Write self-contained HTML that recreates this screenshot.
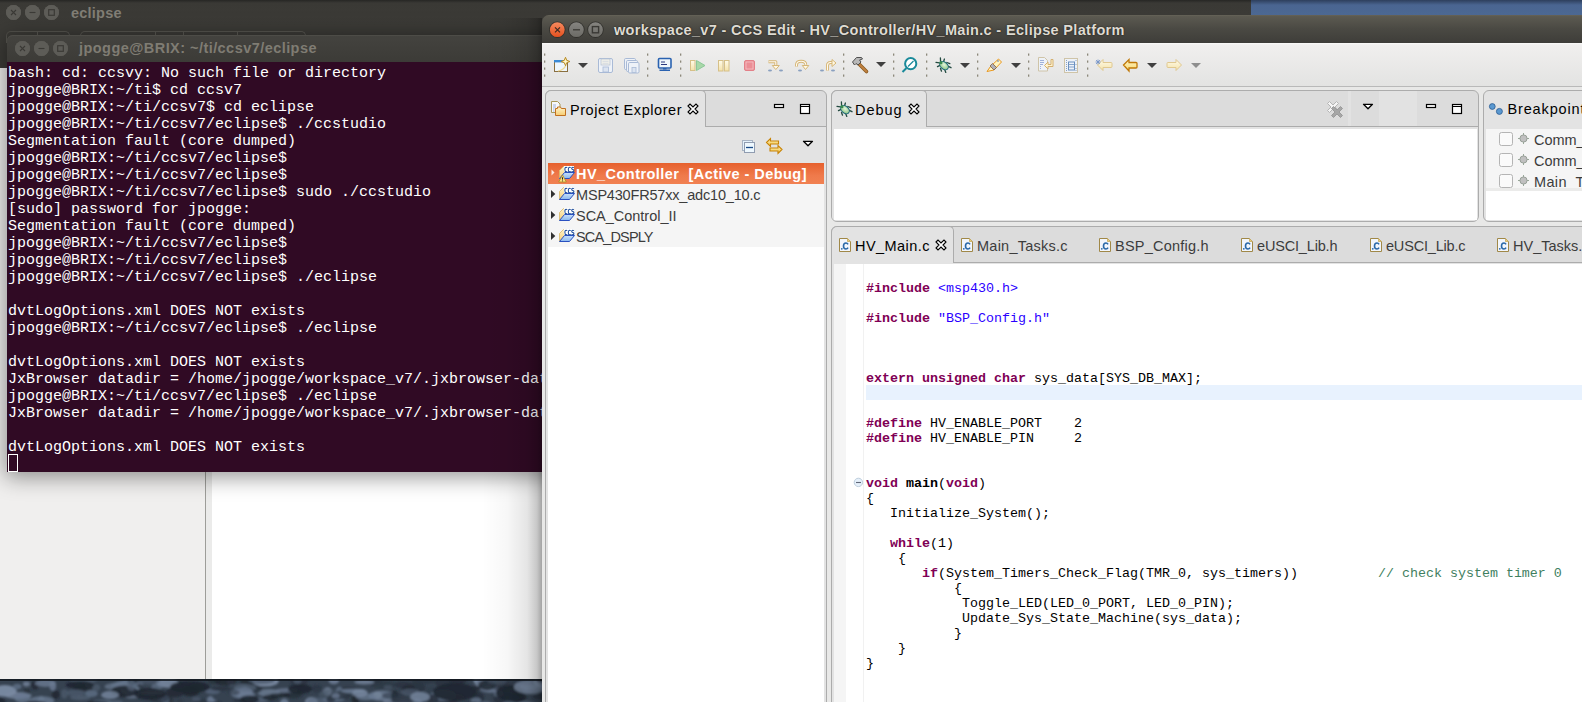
<!DOCTYPE html>
<html><head><meta charset="utf-8"><style>
*{margin:0;padding:0;box-sizing:border-box}
html,body{width:1582px;height:702px;overflow:hidden;background:#3a3935;position:relative;font-family:"Liberation Sans",sans-serif}
.a{position:absolute}
.btn{position:absolute;width:15px;height:15px;border-radius:50%;background:#5b5a55;box-shadow:inset 0 0 0 1px #55544f}
.mono{font-family:"Liberation Mono",monospace}
.term{position:absolute;left:8px;top:65px;font-size:15px;line-height:17px;color:#fff;white-space:pre;font-family:"Liberation Mono",monospace}
.code{position:absolute;left:866px;top:281px;font-size:13.33px;line-height:15px;color:#000;white-space:pre;font-family:"Liberation Mono",monospace}
.k{color:#7f0055;font-weight:bold}
.s{color:#2a00ff}
.c{color:#3f7f5f}
.ui{font-family:"Liberation Sans",sans-serif;white-space:pre;position:absolute;line-height:1}
</style></head><body>

<!-- ===== background eclipse window ===== -->
<div class=a style="left:0;top:0;width:1251px;height:702px;background:linear-gradient(#262624 0,#3a3935 3px,#3c3b37 25px,#3b3a36 100%)"></div>
<div class=a style="left:1251px;top:0;width:331px;height:15px;background:linear-gradient(#2e3f5c,#4a6591 5px,#4c6893)"></div>
<div class=btn style="left:6px;top:5px"></div>
<div class=btn style="left:25px;top:5px"></div>
<div class=btn style="left:44px;top:5px"></div>

<!-- bg window content -->
<div class=a style="left:0;top:68px;width:205px;height:611px;background:#f0efee"></div>
<div class=a style="left:205px;top:68px;width:1px;height:611px;background:#9d9d99"></div>
<div class=a style="left:206px;top:68px;width:6px;height:611px;background:#ebebea"></div>
<div class=a style="left:212px;top:68px;width:330px;height:611px;background:#fff"></div>
<!-- wallpaper strip -->
<svg class=a style="left:0;top:679px" width="542" height="23" viewBox="0 0 542 23"><defs><filter id="blr" x="-5%" y="-50%" width="110%" height="200%"><feGaussianBlur stdDeviation="1.1"/></filter></defs><rect width="542" height="23" fill="#364250"/><g filter="url(#blr)"><ellipse cx="173.8" cy="3.9" rx="10.2" ry="2.3" fill="#222a35" opacity="0.66"/><ellipse cx="27.0" cy="13.2" rx="3.4" ry="3.7" fill="#222a35" opacity="0.61"/><ellipse cx="299.2" cy="1.5" rx="9.2" ry="5.8" fill="#2a3340" opacity="0.76"/><ellipse cx="214.0" cy="25.4" rx="3.5" ry="5.4" fill="#6a7a92" opacity="0.69"/><ellipse cx="293.5" cy="14.8" rx="9.2" ry="4.7" fill="#222a35" opacity="0.76"/><ellipse cx="347.7" cy="9.7" rx="9.0" ry="2.3" fill="#2a3340" opacity="0.78"/><ellipse cx="269.0" cy="13.8" rx="11.5" ry="3.9" fill="#7a8aa2" opacity="0.66"/><ellipse cx="132.1" cy="4.7" rx="11.6" ry="2.3" fill="#6a7a92" opacity="0.74"/><ellipse cx="478.1" cy="19.0" rx="6.2" ry="5.9" fill="#222a35" opacity="0.73"/><ellipse cx="86.1" cy="8.9" rx="13.3" ry="3.7" fill="#222a35" opacity="0.84"/><ellipse cx="311.3" cy="22.8" rx="6.5" ry="4.8" fill="#7a8aa2" opacity="0.76"/><ellipse cx="246.8" cy="21.8" rx="13.4" ry="3.9" fill="#222a35" opacity="0.53"/><ellipse cx="382.2" cy="16.8" rx="13.9" ry="5.3" fill="#6a7a92" opacity="0.82"/><ellipse cx="484.6" cy="9.0" rx="13.3" ry="3.4" fill="#222a35" opacity="0.72"/><ellipse cx="115.5" cy="7.5" rx="11.1" ry="3.6" fill="#7a8aa2" opacity="0.54"/><ellipse cx="243.0" cy="14.3" rx="12.7" ry="5.3" fill="#6a7a92" opacity="0.82"/><ellipse cx="539.5" cy="17.8" rx="7.2" ry="2.9" fill="#222a35" opacity="0.58"/><ellipse cx="123.0" cy="6.1" rx="8.3" ry="4.4" fill="#6a7a92" opacity="0.63"/><ellipse cx="75.4" cy="13.9" rx="9.7" ry="3.3" fill="#4a586a" opacity="0.81"/><ellipse cx="279.6" cy="16.1" rx="10.4" ry="2.2" fill="#1c232c" opacity="0.68"/><ellipse cx="212.6" cy="12.5" rx="7.4" ry="2.8" fill="#5a6a80" opacity="0.70"/><ellipse cx="55.7" cy="15.6" rx="4.1" ry="4.3" fill="#222a35" opacity="0.93"/><ellipse cx="333.8" cy="1.8" rx="5.3" ry="3.5" fill="#6a7a92" opacity="0.93"/><ellipse cx="327.5" cy="12.3" rx="4.3" ry="4.0" fill="#7a8aa2" opacity="0.72"/><ellipse cx="167.1" cy="3.7" rx="11.2" ry="5.0" fill="#7a8aa2" opacity="0.87"/><ellipse cx="84.1" cy="0.6" rx="13.5" ry="4.1" fill="#4a586a" opacity="0.81"/><ellipse cx="499.6" cy="19.7" rx="6.3" ry="4.6" fill="#222a35" opacity="0.81"/><ellipse cx="139.1" cy="9.5" rx="4.8" ry="5.1" fill="#303a48" opacity="0.79"/><ellipse cx="333.5" cy="20.5" rx="11.3" ry="2.8" fill="#5a6a80" opacity="0.87"/><ellipse cx="403.4" cy="5.9" rx="8.7" ry="3.4" fill="#2a3340" opacity="0.95"/><ellipse cx="431.1" cy="12.3" rx="5.1" ry="4.4" fill="#303a48" opacity="0.70"/><ellipse cx="512.2" cy="25.7" rx="13.5" ry="3.5" fill="#5a6a80" opacity="0.55"/><ellipse cx="254.5" cy="8.8" rx="8.3" ry="5.9" fill="#2a3340" opacity="0.72"/><ellipse cx="355.4" cy="20.8" rx="3.9" ry="4.6" fill="#1c232c" opacity="0.85"/><ellipse cx="409.1" cy="12.4" rx="5.0" ry="5.2" fill="#303a48" opacity="0.54"/><ellipse cx="517.3" cy="18.8" rx="8.1" ry="5.0" fill="#222a35" opacity="0.83"/><ellipse cx="88.8" cy="3.3" rx="4.7" ry="5.6" fill="#4a586a" opacity="0.78"/><ellipse cx="323.9" cy="12.3" rx="13.3" ry="2.6" fill="#4a586a" opacity="0.51"/><ellipse cx="436.2" cy="18.9" rx="4.1" ry="5.0" fill="#4a586a" opacity="0.70"/><ellipse cx="476.2" cy="21.5" rx="5.3" ry="3.0" fill="#6a7a92" opacity="0.73"/><ellipse cx="416.6" cy="8.5" rx="9.0" ry="5.3" fill="#2a3340" opacity="0.91"/><ellipse cx="190.3" cy="11.9" rx="9.4" ry="5.6" fill="#1c232c" opacity="0.87"/><ellipse cx="479.7" cy="3.4" rx="4.7" ry="4.0" fill="#7a8aa2" opacity="0.85"/><ellipse cx="330.9" cy="20.2" rx="4.6" ry="2.6" fill="#222a35" opacity="0.75"/><ellipse cx="174.9" cy="13.5" rx="9.1" ry="5.1" fill="#222a35" opacity="0.90"/><ellipse cx="26.4" cy="5.0" rx="3.5" ry="2.4" fill="#7a8aa2" opacity="0.75"/><ellipse cx="414.5" cy="23.7" rx="7.9" ry="4.5" fill="#5a6a80" opacity="0.81"/><ellipse cx="244.7" cy="13.9" rx="8.3" ry="5.8" fill="#6a7a92" opacity="0.92"/><ellipse cx="487.8" cy="5.3" rx="7.9" ry="3.7" fill="#1c232c" opacity="0.70"/><ellipse cx="35.0" cy="6.3" rx="3.8" ry="4.7" fill="#222a35" opacity="0.90"/><ellipse cx="80.3" cy="18.6" rx="10.3" ry="2.6" fill="#4a586a" opacity="0.94"/><ellipse cx="116.2" cy="24.8" rx="7.4" ry="3.9" fill="#5a6a80" opacity="0.57"/><ellipse cx="233.2" cy="13.4" rx="6.7" ry="2.8" fill="#303a48" opacity="0.54"/><ellipse cx="197.0" cy="8.8" rx="8.0" ry="4.8" fill="#1c232c" opacity="0.65"/><ellipse cx="339.4" cy="13.3" rx="3.7" ry="5.9" fill="#5a6a80" opacity="0.94"/><ellipse cx="52.8" cy="6.9" rx="3.4" ry="5.1" fill="#6a7a92" opacity="0.84"/><ellipse cx="447.5" cy="22.1" rx="10.4" ry="5.8" fill="#1c232c" opacity="0.57"/><ellipse cx="502.4" cy="14.8" rx="10.7" ry="2.4" fill="#2a3340" opacity="0.86"/><ellipse cx="96.2" cy="23.3" rx="6.0" ry="2.1" fill="#222a35" opacity="0.86"/><ellipse cx="41.2" cy="22.3" rx="3.7" ry="5.5" fill="#7a8aa2" opacity="0.51"/><ellipse cx="543.9" cy="10.9" rx="13.1" ry="4.5" fill="#2a3340" opacity="0.74"/><ellipse cx="126.6" cy="2.8" rx="4.8" ry="2.2" fill="#5a6a80" opacity="0.92"/><ellipse cx="342.0" cy="13.8" rx="5.3" ry="3.8" fill="#4a586a" opacity="0.62"/><ellipse cx="438.6" cy="25.9" rx="3.4" ry="2.1" fill="#5a6a80" opacity="0.73"/><ellipse cx="130.6" cy="11.6" rx="10.2" ry="4.6" fill="#7a8aa2" opacity="0.75"/><ellipse cx="485.6" cy="25.2" rx="6.4" ry="2.9" fill="#5a6a80" opacity="0.65"/><ellipse cx="454.4" cy="18.4" rx="10.0" ry="3.6" fill="#303a48" opacity="0.94"/><ellipse cx="457.0" cy="0.4" rx="9.9" ry="5.5" fill="#1c232c" opacity="0.57"/><ellipse cx="41.6" cy="21.9" rx="12.6" ry="4.7" fill="#6a7a92" opacity="0.77"/><ellipse cx="377.4" cy="1.2" rx="5.0" ry="3.1" fill="#2a3340" opacity="0.62"/><ellipse cx="525.9" cy="25.3" rx="9.0" ry="3.0" fill="#6a7a92" opacity="0.60"/><ellipse cx="96.0" cy="8.7" rx="3.9" ry="3.1" fill="#5a6a80" opacity="0.61"/><ellipse cx="423.5" cy="2.4" rx="12.0" ry="2.6" fill="#2a3340" opacity="0.68"/><ellipse cx="160.4" cy="16.4" rx="3.9" ry="5.8" fill="#4a586a" opacity="0.80"/><ellipse cx="390.2" cy="22.9" rx="7.3" ry="3.3" fill="#7a8aa2" opacity="0.57"/><ellipse cx="394.7" cy="16.7" rx="3.5" ry="5.3" fill="#1c232c" opacity="0.83"/><ellipse cx="443.3" cy="3.6" rx="8.8" ry="4.0" fill="#2a3340" opacity="0.87"/><ellipse cx="317.4" cy="23.2" rx="10.5" ry="4.8" fill="#5a6a80" opacity="0.54"/><ellipse cx="18.1" cy="16.6" rx="13.6" ry="3.5" fill="#7a8aa2" opacity="0.75"/><ellipse cx="341.5" cy="16.3" rx="10.5" ry="4.0" fill="#2a3340" opacity="0.71"/><ellipse cx="33.7" cy="24.2" rx="12.9" ry="2.4" fill="#222a35" opacity="0.84"/><ellipse cx="256.6" cy="21.0" rx="12.3" ry="2.9" fill="#5a6a80" opacity="0.60"/><ellipse cx="353.8" cy="12.0" rx="12.3" ry="2.3" fill="#6a7a92" opacity="0.85"/><ellipse cx="335.6" cy="16.7" rx="3.9" ry="2.6" fill="#6a7a92" opacity="0.79"/><ellipse cx="377.5" cy="16.1" rx="4.5" ry="3.9" fill="#7a8aa2" opacity="0.62"/><ellipse cx="365.9" cy="18.0" rx="10.4" ry="3.2" fill="#6a7a92" opacity="0.71"/><ellipse cx="252.4" cy="3.1" rx="12.8" ry="2.8" fill="#222a35" opacity="0.92"/><ellipse cx="4.7" cy="11.9" rx="12.0" ry="5.9" fill="#7a8aa2" opacity="0.95"/><ellipse cx="208.5" cy="23.8" rx="13.2" ry="2.3" fill="#222a35" opacity="0.56"/><ellipse cx="284.3" cy="24.8" rx="4.5" ry="5.3" fill="#6a7a92" opacity="0.90"/><ellipse cx="383.2" cy="6.0" rx="12.9" ry="3.9" fill="#2a3340" opacity="0.57"/><ellipse cx="519.4" cy="17.7" rx="7.5" ry="4.9" fill="#1c232c" opacity="0.65"/><ellipse cx="169.5" cy="21.8" rx="3.0" ry="5.0" fill="#1c232c" opacity="0.55"/><ellipse cx="506.4" cy="18.5" rx="12.9" ry="3.2" fill="#303a48" opacity="0.53"/><ellipse cx="210.4" cy="22.6" rx="3.8" ry="5.7" fill="#6a7a92" opacity="0.88"/><ellipse cx="149.9" cy="1.3" rx="10.3" ry="4.5" fill="#4a586a" opacity="0.61"/><ellipse cx="141.7" cy="13.3" rx="5.1" ry="3.5" fill="#1c232c" opacity="0.90"/><ellipse cx="443.2" cy="16.4" rx="13.0" ry="5.8" fill="#5a6a80" opacity="0.82"/><ellipse cx="22.3" cy="19.0" rx="8.0" ry="5.0" fill="#6a7a92" opacity="0.72"/><ellipse cx="498.4" cy="14.3" rx="4.9" ry="3.7" fill="#6a7a92" opacity="0.63"/><ellipse cx="402.9" cy="25.4" rx="5.9" ry="4.6" fill="#6a7a92" opacity="0.72"/><ellipse cx="364.2" cy="3.1" rx="10.1" ry="2.3" fill="#7a8aa2" opacity="0.75"/><ellipse cx="245.0" cy="8.7" rx="11.4" ry="3.7" fill="#5a6a80" opacity="0.61"/><ellipse cx="91.4" cy="14.5" rx="6.5" ry="3.5" fill="#5a6a80" opacity="0.90"/><ellipse cx="408.8" cy="10.7" rx="7.6" ry="4.1" fill="#1c232c" opacity="0.62"/><ellipse cx="410.2" cy="13.0" rx="9.3" ry="3.4" fill="#5a6a80" opacity="0.54"/><ellipse cx="490.0" cy="10.0" rx="10.1" ry="3.7" fill="#6a7a92" opacity="0.88"/><ellipse cx="476.8" cy="0.6" rx="3.4" ry="4.8" fill="#7a8aa2" opacity="0.94"/><ellipse cx="265.4" cy="1.9" rx="13.2" ry="5.7" fill="#7a8aa2" opacity="0.94"/><ellipse cx="132.2" cy="2.8" rx="4.7" ry="4.1" fill="#222a35" opacity="0.92"/><ellipse cx="393.4" cy="16.8" rx="11.4" ry="3.8" fill="#2a3340" opacity="0.50"/><ellipse cx="64.4" cy="14.8" rx="3.4" ry="4.9" fill="#4a586a" opacity="0.78"/><ellipse cx="286.6" cy="11.4" rx="11.4" ry="2.4" fill="#6a7a92" opacity="0.74"/><ellipse cx="316.8" cy="10.1" rx="5.5" ry="4.4" fill="#2a3340" opacity="0.74"/><ellipse cx="545.0" cy="7.2" rx="6.5" ry="5.4" fill="#5a6a80" opacity="0.71"/><ellipse cx="124.6" cy="6.4" rx="13.6" ry="4.8" fill="#6a7a92" opacity="0.52"/><ellipse cx="102.2" cy="23.0" rx="10.1" ry="2.3" fill="#5a6a80" opacity="0.80"/><ellipse cx="505.7" cy="5.9" rx="3.4" ry="3.4" fill="#1c232c" opacity="0.66"/><ellipse cx="213.8" cy="0.2" rx="6.2" ry="5.4" fill="#222a35" opacity="0.59"/><ellipse cx="530.4" cy="8.1" rx="12.0" ry="2.9" fill="#5a6a80" opacity="0.62"/><ellipse cx="485.9" cy="2.8" rx="9.9" ry="4.4" fill="#5a6a80" opacity="0.72"/><ellipse cx="497.5" cy="1.5" rx="9.5" ry="5.7" fill="#2a3340" opacity="0.60"/><ellipse cx="532.7" cy="3.7" rx="3.6" ry="2.2" fill="#1c232c" opacity="0.70"/><ellipse cx="388.0" cy="8.2" rx="4.2" ry="2.3" fill="#4a586a" opacity="0.65"/><ellipse cx="97.4" cy="24.3" rx="11.2" ry="2.1" fill="#1c232c" opacity="0.88"/><ellipse cx="538.7" cy="11.5" rx="4.2" ry="2.3" fill="#222a35" opacity="0.66"/><ellipse cx="522.4" cy="3.2" rx="13.6" ry="2.8" fill="#303a48" opacity="0.85"/><ellipse cx="165.4" cy="20.9" rx="4.0" ry="4.8" fill="#5a6a80" opacity="0.67"/><ellipse cx="502.6" cy="5.0" rx="7.0" ry="5.6" fill="#2a3340" opacity="0.78"/><ellipse cx="131.9" cy="16.3" rx="7.5" ry="3.5" fill="#7a8aa2" opacity="0.53"/><ellipse cx="502.9" cy="6.7" rx="11.2" ry="5.6" fill="#303a48" opacity="0.66"/><ellipse cx="179.9" cy="24.8" rx="3.5" ry="5.0" fill="#303a48" opacity="0.92"/><ellipse cx="159.2" cy="18.8" rx="9.6" ry="5.2" fill="#222a35" opacity="0.51"/><ellipse cx="124.1" cy="12.4" rx="13.5" ry="5.8" fill="#1c232c" opacity="0.86"/><ellipse cx="499.3" cy="21.2" rx="4.5" ry="4.0" fill="#2a3340" opacity="0.86"/><ellipse cx="402.6" cy="21.4" rx="11.5" ry="4.4" fill="#303a48" opacity="0.89"/><ellipse cx="249.4" cy="20.4" rx="9.6" ry="4.0" fill="#1c232c" opacity="0.84"/><ellipse cx="131.5" cy="1.7" rx="3.4" ry="4.2" fill="#303a48" opacity="0.57"/><ellipse cx="230.5" cy="2.7" rx="3.8" ry="4.5" fill="#5a6a80" opacity="0.54"/><ellipse cx="270.2" cy="18.5" rx="7.9" ry="2.9" fill="#1c232c" opacity="0.71"/><ellipse cx="487.0" cy="6.1" rx="8.9" ry="5.1" fill="#222a35" opacity="0.85"/><ellipse cx="157.2" cy="7.3" rx="5.9" ry="3.0" fill="#6a7a92" opacity="0.59"/><ellipse cx="131.6" cy="6.4" rx="4.7" ry="5.5" fill="#5a6a80" opacity="0.65"/><ellipse cx="213.6" cy="25.8" rx="8.6" ry="2.9" fill="#222a35" opacity="0.79"/><ellipse cx="542.0" cy="2.7" rx="8.2" ry="5.3" fill="#7a8aa2" opacity="0.91"/><ellipse cx="17.3" cy="7.6" rx="4.3" ry="2.8" fill="#5a6a80" opacity="0.92"/><ellipse cx="200.5" cy="22.5" rx="7.9" ry="3.0" fill="#2a3340" opacity="0.55"/><ellipse cx="324.1" cy="16.1" rx="5.4" ry="3.5" fill="#4a586a" opacity="0.52"/><ellipse cx="546.9" cy="1.0" rx="11.1" ry="5.7" fill="#2a3340" opacity="0.87"/><ellipse cx="220.8" cy="9.7" rx="9.8" ry="2.3" fill="#2a3340" opacity="0.86"/><ellipse cx="297.5" cy="1.6" rx="4.1" ry="3.6" fill="#4a586a" opacity="0.79"/><ellipse cx="45.3" cy="4.3" rx="10.6" ry="3.6" fill="#6a7a92" opacity="0.80"/><ellipse cx="225.7" cy="1.3" rx="11.2" ry="5.5" fill="#1c232c" opacity="0.69"/><ellipse cx="472.1" cy="25.9" rx="7.0" ry="2.8" fill="#1c232c" opacity="0.59"/><ellipse cx="-1.8" cy="23.4" rx="7.7" ry="5.3" fill="#1c232c" opacity="0.76"/><ellipse cx="196.3" cy="20.1" rx="4.4" ry="2.2" fill="#4a586a" opacity="0.79"/><ellipse cx="497.2" cy="2.3" rx="9.8" ry="3.5" fill="#4a586a" opacity="0.57"/><ellipse cx="151.4" cy="13.6" rx="13.2" ry="2.4" fill="#7a8aa2" opacity="0.84"/><ellipse cx="432.3" cy="20.9" rx="6.3" ry="5.3" fill="#2a3340" opacity="0.94"/><ellipse cx="261.5" cy="1.4" rx="13.2" ry="3.6" fill="#4a586a" opacity="0.79"/><ellipse cx="190" cy="8" rx="20" ry="6" fill="#1e2630" opacity=".9"/><ellipse cx="455" cy="13" rx="22" ry="9" fill="#1e2630" opacity=".9"/><ellipse cx="510" cy="14" rx="14" ry="8" fill="#1e2630" opacity=".9"/><ellipse cx="300" cy="10" rx="12" ry="5" fill="#1e2630" opacity=".9"/><ellipse cx="150" cy="15" rx="16" ry="6" fill="#1e2630" opacity=".9"/><ellipse cx="80" cy="6" rx="14" ry="4" fill="#1e2630" opacity=".9"/><ellipse cx="530" cy="8" rx="16" ry="7" fill="#7888a0" opacity=".8"/><ellipse cx="420" cy="18" rx="10" ry="5" fill="#7888a0" opacity=".8"/><ellipse cx="110" cy="16" rx="9" ry="4" fill="#7888a0" opacity=".8"/><ellipse cx="360" cy="14" rx="8" ry="4" fill="#7888a0" opacity=".8"/></g><rect width="542" height="2" fill="#10151c" opacity=".8"/></svg>
<!-- shadow under terminal -->
<div class=a style="left:7px;top:35px;width:560px;height:437px;border-radius:6px 6px 0 0;box-shadow:0 3px 22px 2px rgba(0,0,0,.42)"></div>
<!-- ===== terminal window ===== -->
<div class=a style="left:6px;top:31px;width:64px;height:12px;border:1px solid #4a4944;border-bottom:0;border-radius:5px 5px 0 0"></div>
<div class=a style="left:80px;top:31px;width:226px;height:12px;border:1px solid #4a4944;border-bottom:0;border-radius:5px 5px 0 0"></div>
<div class=a style="left:37px;top:31px;width:1px;height:4px;background:#4a4944"></div>
<div class=a style="left:155px;top:31px;width:1px;height:4px;background:#4a4944"></div>
<div class=a style="left:183px;top:31px;width:1px;height:4px;background:#4a4944"></div>
<div class=a style="left:237px;top:31px;width:1px;height:4px;background:#4a4944"></div>
<div class=a style="left:7px;top:35px;width:560px;height:27px;border-radius:6px 6px 0 0;background:linear-gradient(#44433f,#3c3b37);box-shadow:inset 0 1px 0 #4d4c47"></div>
<div class=btn style="left:15px;top:41px"></div>
<div class=btn style="left:34px;top:41px"></div>
<div class=btn style="left:53px;top:41px"></div>
<div class=a style="left:7px;top:62px;width:535px;height:410px;background:#300a24"></div>
<div class=term id=term>bash: cd: ccsvy: No such file or directory
jpogge@BRIX:~/ti$ cd ccsv7
jpogge@BRIX:~/ti/ccsv7$ cd eclipse
jpogge@BRIX:~/ti/ccsv7/eclipse$ ./ccstudio
Segmentation fault (core dumped)
jpogge@BRIX:~/ti/ccsv7/eclipse$
jpogge@BRIX:~/ti/ccsv7/eclipse$
jpogge@BRIX:~/ti/ccsv7/eclipse$ sudo ./ccstudio
[sudo] password for jpogge:
Segmentation fault (core dumped)
jpogge@BRIX:~/ti/ccsv7/eclipse$
jpogge@BRIX:~/ti/ccsv7/eclipse$
jpogge@BRIX:~/ti/ccsv7/eclipse$ ./eclipse

dvtLogOptions.xml DOES NOT exists
jpogge@BRIX:~/ti/ccsv7/eclipse$ ./eclipse

dvtLogOptions.xml DOES NOT exists
JxBrowser datadir = /home/jpogge/workspace_v7/.jxbrowser-data
jpogge@BRIX:~/ti/ccsv7/eclipse$ ./eclipse
JxBrowser datadir = /home/jpogge/workspace_v7/.jxbrowser-data

dvtLogOptions.xml DOES NOT exists</div>
<div class=a style="left:7.5px;top:453.5px;width:10.5px;height:18px;border:1.3px solid #fff"></div>

<!-- shadow left of CCS window -->
<div class=a style="left:482px;top:18px;width:60px;height:684px;background:linear-gradient(90deg,rgba(0,0,0,0) 0,rgba(0,0,0,.03) 25px,rgba(0,0,0,.1) 45px,rgba(0,0,0,.22) 55px,rgba(0,0,0,.36) 60px)"></div>
<!-- ===== CCS eclipse window ===== -->
<div class=a style="left:542px;top:30px;width:1040px;height:672px;background:#e8e8e7"></div>
<div class=a style="left:542px;top:15px;width:1060px;height:28px;border-radius:7px 7px 0 0;background:linear-gradient(#69665a 0,#5c5a51 1px,#4a4943 50%,#3e3d39 100%)"></div>
<div class=a style="left:550px;top:22px;width:15px;height:15px;border-radius:50%;background:radial-gradient(circle at 50% 35%,#f5804f,#e0532a)"></div>
<div class=a style="left:569px;top:22px;width:15px;height:15px;border-radius:50%;background:linear-gradient(#6f6d66,#57554f);box-shadow:inset 0 0 0 1px #45443f"></div>
<div class=a style="left:588px;top:22px;width:15px;height:15px;border-radius:50%;background:linear-gradient(#6f6d66,#57554f);box-shadow:inset 0 0 0 1px #45443f"></div>
<!-- toolbar -->
<div class=a style="left:542px;top:43px;width:1040px;height:43px;background:linear-gradient(#fafaf9 0,#f0efee 2px,#e3e3e2 100%)"></div>
<div class=a style="left:542px;top:86px;width:1040px;height:1px;background:#b9b9b9"></div>

<!-- Project Explorer panel -->
<div class=a style="left:545px;top:90px;width:282px;height:640px;border:1px solid #acacac;border-radius:6px 6px 0 0;background:#dcdcdc"></div>
<div class=a style="left:545px;top:90px;width:161px;height:37px;border:1px solid #acacac;border-bottom:0;border-radius:6px 5px 0 0;background:#e3e3e3"></div>
<div class=a style="left:706px;top:126px;width:120px;height:1px;background:#acacac"></div>
<div class=a style="left:546px;top:127px;width:280px;height:600px;background:#e3e3e3"></div>
<div class=a style="left:548px;top:163px;width:276px;height:84px;background:#f5f5f5"></div>
<div class=a style="left:548px;top:247px;width:276px;height:500px;background:#fff"></div>
<div class=a style="left:548px;top:163px;width:276px;height:21px;background:linear-gradient(#e6602d,#ef7a4b 60%,#f18152)"></div>

<!-- Debug panel -->
<div class=a style="left:831px;top:90px;width:648px;height:132px;border:1px solid #acacac;border-radius:6px;background:#dcdcdc"></div>
<div class=a style="left:1348px;top:91px;width:3px;height:35px;background:#e2e2e2"></div>
<div class=a style="left:1379px;top:91px;width:38px;height:35px;background:#e2e2e2"></div>
<div class=a style="left:831px;top:90px;width:96px;height:37px;border:1px solid #acacac;border-bottom:0;border-radius:6px 5px 0 0;background:#e3e3e3"></div>
<div class=a style="left:927px;top:126px;width:551px;height:1px;background:#acacac"></div>
<div class=a style="left:832px;top:127px;width:646px;height:94px;border-radius:0 0 5px 5px;background:#e3e3e3"></div>
<div class=a style="left:834px;top:129px;width:643px;height:91px;background:#fff"></div>

<!-- Breakpoints panel -->
<div class=a style="left:1483px;top:90px;width:200px;height:132px;border:1px solid #acacac;border-radius:6px;background:#e3e3e3"></div>
<div class=a style="left:1486px;top:129px;width:200px;height:59px;background:#f5f5f5"></div>
<div class=a style="left:1486px;top:188px;width:200px;height:3px;background:#ebebea"></div>
<div class=a style="left:1486px;top:191px;width:200px;height:29px;background:#fff"></div>

<!-- Editor panel -->
<div class=a style="left:831px;top:226px;width:800px;height:600px;border:1px solid #acacac;border-radius:6px 6px 0 0;background:#dcdcdc"></div>
<div class=a style="left:831px;top:226px;width:123px;height:37px;border:1px solid #acacac;border-bottom:0;border-radius:6px 5px 0 0;background:#e3e3e3"></div>
<div class=a style="left:954px;top:262px;width:700px;height:1px;background:#acacac"></div>
<div class=a style="left:832px;top:263px;width:800px;height:500px;background:#e3e3e3"></div>
<div class=a style="left:834px;top:264px;width:800px;height:500px;background:#fff"></div>
<div class=a style="left:834px;top:264px;width:12px;height:500px;background:#f5f5f5"></div>
<div class=a style="left:863px;top:264px;width:1px;height:500px;background:#f1f1f1"></div>
<div class=a style="left:866px;top:385px;width:720px;height:15px;background:#e8f2fe"></div>

<div class=code id=code><span class=k>#include</span> <span class=s>&lt;msp430.h&gt;</span>

<span class=k>#include</span> <span class=s>"BSP_Config.h"</span>



<span class=k>extern</span> <span class=k>unsigned</span> <span class=k>char</span> sys_data[SYS_DB_MAX];


<span class=k>#define</span> HV_ENABLE_PORT    2
<span class=k>#define</span> HV_ENABLE_PIN     2


<span class=k>void</span> <b>main</b>(<span class=k>void</span>)
{
   Initialize_System();

   <span class=k>while</span>(1)
    {
       <span class=k>if</span>(System_Timers_Check_Flag(TMR_0, sys_timers))          <span class=c>// check system timer 0</span>
           {
            Toggle_LED(LED_0_PORT, LED_0_PIN);
            Update_Sys_State_Machine(sys_data);
           }
    }
}</div>

<!-- TEXTS -->
<div class=ui style="left:71.0px;top:5.73px;font-size:14.5px;letter-spacing:0.221px;color:#807d74;font-weight:bold">eclipse</div>
<div class=ui style="left:79.0px;top:40.73px;font-size:14.5px;letter-spacing:0.448px;color:#7f7c73;font-weight:bold">jpogge@BRIX: ~/ti/ccsv7/eclipse</div>
<div class=ui style="left:614.0px;top:22.73px;font-size:14.5px;letter-spacing:0.331px;color:#dfdbd2;font-weight:bold;text-shadow:0 0 1.5px rgba(0,0,0,.85)">workspace_v7 - CCS Edit - HV_Controller/HV_Main.c - Eclipse Platform</div>
<div class=ui style="left:570.0px;top:102.73px;font-size:14.5px;letter-spacing:0.557px;color:#000">Project Explorer</div>
<div class=ui style="left:576.0px;top:166.73px;font-size:14.5px;letter-spacing:0.460px;color:#fff;font-weight:bold">HV_Controller  [Active - Debug]</div>
<div class=ui style="left:576.0px;top:187.73px;font-size:14.5px;letter-spacing:-0.187px;color:#3c3c3c">MSP430FR57xx_adc10_10.c</div>
<div class=ui style="left:576.0px;top:208.73px;font-size:14.5px;letter-spacing:-0.019px;color:#3c3c3c">SCA_Control_II</div>
<div class=ui style="left:576.0px;top:229.73px;font-size:14.5px;letter-spacing:-0.857px;color:#3c3c3c">SCA_DSPLY</div>
<div class=ui style="left:855.0px;top:102.73px;font-size:14.5px;letter-spacing:0.943px;color:#000">Debug</div>
<div class=ui style="left:1507.5px;top:102.23px;font-size:14.5px;letter-spacing:0.853px;color:#000">Breakpoint</div>
<div class=ui style="left:1534.0px;top:132.73px;font-size:14.5px;letter-spacing:-0.064px;color:#3c3c3c">Comm_</div>
<div class=ui style="left:1534.0px;top:153.73px;font-size:14.5px;letter-spacing:-0.064px;color:#3c3c3c">Comm_</div>
<div class=ui style="left:1534.0px;top:174.73px;font-size:14.5px;letter-spacing:0.360px;color:#3c3c3c">Main  T</div>
<div class=ui style="left:855.0px;top:238.73px;font-size:14.5px;letter-spacing:0.448px;color:#000">HV_Main.c</div>
<div class=ui style="left:977.0px;top:238.73px;font-size:14.5px;letter-spacing:0.242px;color:#3c3c3c">Main_Tasks.c</div>
<div class=ui style="left:1115.0px;top:238.73px;font-size:14.5px;letter-spacing:0.220px;color:#3c3c3c">BSP_Config.h</div>
<div class=ui style="left:1257.0px;top:238.73px;font-size:14.5px;letter-spacing:-0.171px;color:#3c3c3c">eUSCI_Lib.h</div>
<div class=ui style="left:1386.0px;top:238.73px;font-size:14.5px;letter-spacing:-0.190px;color:#3c3c3c">eUSCI_Lib.c</div>
<div class=ui style="left:1513.0px;top:238.73px;font-size:14.5px;letter-spacing:0.000px;color:#3c3c3c">HV_Tasks.c</div>
<!-- /TEXTS -->
<!-- ICONS1 -->
<svg class=a style="left:0;top:0" width="1582" height="702" viewBox="0 0 1582 702">
<defs>
 <linearGradient id="gOr" x1="0" y1="0" x2="0" y2="1"><stop offset="0" stop-color="#f68a5e"/><stop offset="1" stop-color="#e4501f"/></linearGradient>
 <linearGradient id="gGr" x1="0" y1="0" x2="0" y2="1"><stop offset="0" stop-color="#858480"/><stop offset="1" stop-color="#6c6b66"/></linearGradient>
 <linearGradient id="gTan" x1="0" y1="0" x2="0" y2="1"><stop offset="0" stop-color="#fffbea"/><stop offset="1" stop-color="#f4e2a8"/></linearGradient>
 <linearGradient id="gYel" x1="0" y1="0" x2="0" y2="1"><stop offset="0" stop-color="#fff6c8"/><stop offset="1" stop-color="#f8d870"/></linearGradient>
</defs>
<!-- bg window buttons -->
<g fill="#5d5c57"><circle cx="13.5" cy="12.5" r="7.5"/><circle cx="32.5" cy="12.5" r="7.5"/><circle cx="51.5" cy="12.5" r="7.5"/></g>
<g stroke="#3b3a36" stroke-width="1.1" fill="none"><path d="M11 10l5 5M16 10l-5 5"/><path d="M29.5 12.5h6"/><rect x="48.7" y="9.7" width="5.6" height="5.6" stroke-width="1.2"/></g>
<!-- terminal buttons -->
<g fill="#5d5c57"><circle cx="22.5" cy="48.5" r="7.5"/><circle cx="41.5" cy="48.5" r="7.5"/><circle cx="60.5" cy="48.5" r="7.5"/></g>
<g stroke="#3b3a36" stroke-width="1.1" fill="none"><path d="M20 46l5 5M25 46l-5 5"/><path d="M38.5 48.5h6"/><rect x="57.7" y="45.7" width="5.6" height="5.6" stroke-width="1.2"/></g>
<!-- CCS title buttons -->
<circle cx="557.3" cy="29.7" r="8.2" fill="#302f2b"/><circle cx="557.3" cy="29.7" r="7.4" fill="url(#gOr)"/>
<circle cx="576.4" cy="29.7" r="8.2" fill="#302f2b"/><circle cx="576.4" cy="29.7" r="7.4" fill="url(#gGr)"/>
<circle cx="595.5" cy="29.7" r="8.2" fill="#302f2b"/><circle cx="595.5" cy="29.7" r="7.4" fill="url(#gGr)"/>
<g stroke="#3a2a22" stroke-width="1.2" fill="none"><path d="M555 27.3l5 5M560 27.3l-5 5"/></g>
<path d="M573 29.8h7" stroke="#3a3935" stroke-width="1.3"/>
<rect x="592.4" y="26.6" width="6.2" height="6.2" fill="none" stroke="#3a3935" stroke-width="1.4"/>

<!-- toolbar grips -->
<defs></defs>
<g fill="#8c887a">
 <g transform="translate(544 53.5)"><g><rect x="0" y="0" width="1.3" height="2.2"/><rect x="0" y="7" width="1.3" height="2.2"/><rect x="0" y="14" width="1.3" height="2.2"/><rect x="0" y="21" width="1.3" height="2.2"/></g></g><g transform="translate(647 53.5)"><g><rect x="0" y="0" width="1.3" height="2.2"/><rect x="0" y="7" width="1.3" height="2.2"/><rect x="0" y="14" width="1.3" height="2.2"/><rect x="0" y="21" width="1.3" height="2.2"/></g></g><g transform="translate(680 53.5)"><g><rect x="0" y="0" width="1.3" height="2.2"/><rect x="0" y="7" width="1.3" height="2.2"/><rect x="0" y="14" width="1.3" height="2.2"/><rect x="0" y="21" width="1.3" height="2.2"/></g></g><g transform="translate(843 53.5)"><g><rect x="0" y="0" width="1.3" height="2.2"/><rect x="0" y="7" width="1.3" height="2.2"/><rect x="0" y="14" width="1.3" height="2.2"/><rect x="0" y="21" width="1.3" height="2.2"/></g></g><g transform="translate(893 53.5)"><g><rect x="0" y="0" width="1.3" height="2.2"/><rect x="0" y="7" width="1.3" height="2.2"/><rect x="0" y="14" width="1.3" height="2.2"/><rect x="0" y="21" width="1.3" height="2.2"/></g></g><g transform="translate(926 53.5)"><g><rect x="0" y="0" width="1.3" height="2.2"/><rect x="0" y="7" width="1.3" height="2.2"/><rect x="0" y="14" width="1.3" height="2.2"/><rect x="0" y="21" width="1.3" height="2.2"/></g></g><g transform="translate(977 53.5)"><g><rect x="0" y="0" width="1.3" height="2.2"/><rect x="0" y="7" width="1.3" height="2.2"/><rect x="0" y="14" width="1.3" height="2.2"/><rect x="0" y="21" width="1.3" height="2.2"/></g></g><g transform="translate(1028 53.5)"><g><rect x="0" y="0" width="1.3" height="2.2"/><rect x="0" y="7" width="1.3" height="2.2"/><rect x="0" y="14" width="1.3" height="2.2"/><rect x="0" y="21" width="1.3" height="2.2"/></g></g><g transform="translate(1087 53.5)"><g><rect x="0" y="0" width="1.3" height="2.2"/><rect x="0" y="7" width="1.3" height="2.2"/><rect x="0" y="14" width="1.3" height="2.2"/><rect x="0" y="21" width="1.3" height="2.2"/></g></g>
</g>
<!-- new wizard -->
<rect x="554.5" y="60.5" width="13" height="11" fill="#eef6fc" stroke="#8a7040" stroke-width="1"/>
<rect x="554" y="60" width="9" height="2.4" fill="#3a8ad6"/>
<path d="M558 71q6 -1 8 -6" stroke="#f0d890" stroke-width="1.2" fill="none"/>
<path d="M565.5 57.3l1.2 3 3.2 1.2-3.2 1.2-1.2 3-1.2-3-3.2-1.2 3.2-1.2z" fill="#fff6c8" stroke="#b88a20" stroke-width="1" stroke-linejoin="round"/>
<!-- dropdown arrows -->
<g fill="#404040"><path d="M578 63h10l-5 5z"/><path d="M876 62h10l-5 5z"/><path d="M960 63h10l-5 5z"/><path d="M1011 63h10l-5 5z"/><path d="M1147 63h10l-5 5z"/></g>
<path d="M1191 63h10l-5 5z" fill="#8e8e8e"/>
<!-- save (disabled) -->
<g fill="#eef2f8" stroke="#a9bad6" stroke-width="1">
 <rect x="598.5" y="58.5" width="14" height="14" rx="1.5"/>
</g>
<rect x="601" y="59" width="9" height="6" fill="#f2f2ea" stroke="#b8c4d4" stroke-width=".8"/><path d="M602.5 61.3h6M602.5 63.3h6" stroke="#c8d0dc" stroke-width=".7"/>
<rect x="603" y="67" width="5.5" height="5" fill="#dce4f0" stroke="#a9bad6" stroke-width=".8"/>
<!-- save all -->
<g fill="#eef2f8" stroke="#a9bad6" stroke-width="1">
 <rect x="624.5" y="58.5" width="11" height="11" rx="1.2"/>
 <rect x="626.5" y="60.5" width="11" height="11" rx="1.2"/>
 <rect x="628.5" y="62.5" width="10.5" height="10.5" rx="1.2"/>
</g>
<rect x="632" y="67.5" width="4" height="5" fill="#dce4f0" stroke="#a9bad6" stroke-width=".8"/>
<!-- monitor -->
<rect x="658.5" y="58.5" width="12.5" height="9.5" rx="1" fill="#eef6fc" stroke="#2a62b0" stroke-width="1.6"/>
<path d="M661 62h4M661 64.5h6" stroke="#2a3a80" stroke-width="1"/>
<rect x="663" y="68" width="3.5" height="1.5" fill="#2a62b0"/><rect x="659.5" y="69.5" width="10.5" height="1.5" fill="#2a62b0"/>
<!-- resume -->
<rect x="690.5" y="60.5" width="4.5" height="10" fill="url(#gTan)" stroke="#d6c088" stroke-width="1"/>
<path d="M696.5 60.5l8.5 5-8.5 5z" fill="#a8d8a8" stroke="#8cc898" stroke-width="1"/>
<!-- suspend -->
<rect x="718.5" y="60.5" width="4.5" height="10.5" fill="url(#gTan)" stroke="#d6c088" stroke-width="1"/>
<rect x="724.5" y="60.5" width="4.5" height="10.5" fill="url(#gTan)" stroke="#d6c088" stroke-width="1"/>
<!-- terminate -->
<rect x="744.5" y="60.5" width="10" height="10" rx="1.5" fill="#eb8e96" stroke="#e38088" stroke-width="1"/>
<rect x="746" y="62" width="7" height="7" fill="none" stroke="#f6c8cc" stroke-width=".7"/>
<!-- step into -->
<g fill="none" stroke-linecap="butt" stroke-linejoin="round">
 <path d="M768.5 61.8h7.3v4" stroke="#d6b676" stroke-width="3"/>
 <path d="M768.8 61.8h7v4" stroke="#fffaf0" stroke-width="1.1"/>
 <path d="M796.5 66.5v-1.5q0-3.8 4.6-3.8t4.6 3.5" stroke="#d6b676" stroke-width="3"/>
 <path d="M796.5 66.3v-1.3q0-3.8 4.6-3.8t4.6 3.5" stroke="#fffaf0" stroke-width="1.1"/>
 <path d="M827.5 70.5v-5q0-3 3-3h2" stroke="#d6b676" stroke-width="3"/>
 <path d="M827.5 70.2v-4.7q0-3 3-3h2.2" stroke="#fffaf0" stroke-width="1.1"/>
</g>
<path d="M772.3 65.5h7l-3.5 4z" fill="#fff8e4" stroke="#d6b676" stroke-width="1"/>
<path d="M796 63.5h6.5l-3.3 4z" fill="#fff8e4" stroke="#d6b676" stroke-width="1" transform="translate(6.3 2)"/>
<path d="M832 59.5v7l4-3.5z" fill="#fff8e4" stroke="#d6b676" stroke-width="1"/>
<g fill="#8aa0c0"><ellipse cx="770" cy="70.6" rx="2" ry="1"/><ellipse cx="781" cy="70.6" rx="2" ry="1"/><ellipse cx="800" cy="70.6" rx="2" ry="1"/><ellipse cx="822" cy="70.6" rx="2" ry="1"/><ellipse cx="833" cy="70.6" rx="2" ry="1"/></g>
<!-- hammer -->
<path d="M858.5 63.5l8 8" stroke="#8a5a20" stroke-width="3.6" stroke-linecap="round"/>
<path d="M858.5 63.5l8 8" stroke="#c08040" stroke-width="2" stroke-linecap="round"/>
<path d="M852.5 62l4-4.5h5l1 1.5-3 1 1.5 2-3 3-2-1.5-1.5 1.5z" fill="#b8b8b8" stroke="#505050" stroke-width="1"/>
<!-- magnifier -->
<circle cx="910.7" cy="63.7" r="5.6" fill="#fff" stroke="#1a8a9a" stroke-width="2"/>
<path d="M906.5 68l-4 4" stroke="#1a8a9a" stroke-width="2"/>
<path d="M908 66.5l5.5-5.5" stroke="#1a8a9a" stroke-width="1.2"/>
<!-- bug -->
<path d="M940.4 58.0L940.6 61.5M944.4 59.0L943.5 62.0M936.0 62.4L939.5 62.8M946.8 62.5L949.8 63.7M937.5 66.6L940.0 65.3M948.3 66.3L951.0 67.7M940.5 68.5L941.5 71.2M944.7 69.5L945.8 72.4" stroke="#234a40" stroke-width="1.3" fill="none" stroke-linecap="round"/><ellipse cx="944.0" cy="65.6" rx="4.9" ry="3.4" transform="rotate(42 944.0 65.6)" fill="url(#gBug2)" stroke="#1d6a7a" stroke-width="1"/><circle cx="940.9" cy="62.7" r="1.6" fill="#3a8a50"/>
<defs><radialGradient id="gBug2" cx=".45" cy=".4" r=".6"><stop offset="0" stop-color="#e4f6dc"/><stop offset="1" stop-color="#8cc486"/></radialGradient></defs>
<!-- pen / flashlight -->
<path d="M987 71.5l3.5-5 8-7.5 3 3-7.5 8z" fill="#fff4c0" stroke="#e89820" stroke-width="1"/>
<path d="M990 66l4 4 2.5-2.5-4-4z" fill="#b0b0b8" stroke="#806040" stroke-width=".8"/>
<circle cx="998" cy="61" r=".7" fill="#3050a0"/>
<!-- doc with return arrow -->
<path d="M1038.5 57.5h6l3 3v10.5h-9z" fill="#eef2f8" stroke="#cfc4a8" stroke-width="1"/>
<path d="M1040 60.5h4M1040 62.5h4M1040 64.5h3M1040 66.5h1M1040 68.5h1" stroke="#8aa0d0" stroke-width=".8"/>
<path d="M1051 59.5h2v7h-5v2.5l-3.5-3.5 3.5-3.5v2.5h3z" fill="#fff4d0" stroke="#d4b070" stroke-width="1"/>
<!-- doc outline -->
<rect x="1064.5" y="58.5" width="13" height="14" fill="#eef2f8" stroke="#cfc4a8" stroke-width="1"/>
<rect x="1068.5" y="62" width="6" height="8" fill="none" stroke="#6a90c0" stroke-width="1"/>
<path d="M1068.5 64.5h6M1068.5 67h6" stroke="#6a90c0" stroke-width=".8"/>
<g fill="#8aa0c0"><rect x="1066" y="60" width="1" height="1"/><rect x="1066" y="62" width="1" height="1"/><rect x="1066" y="64" width="1" height="1"/><rect x="1066" y="66" width="1" height="1"/><rect x="1066" y="68" width="1" height="1"/><rect x="1066" y="70" width="1" height="1"/><rect x="1075.5" y="60" width="1" height="1"/><rect x="1075.5" y="64" width="1" height="1"/><rect x="1075.5" y="68" width="1" height="1"/><rect x="1075.5" y="70" width="1" height="1"/></g>
<!-- back with star -->
<path d="M1097.5 65l5.5-5.5v3h8q1 0 1 1v3q0 1-1 1h-8v3z" fill="url(#gTan)" stroke="#e0c890" stroke-width="1"/>
<path d="M1098 59.5v5M1095.5 62h5M1096 60l4 4M1100 60l-4 4" stroke="#7090c8" stroke-width=".8"/>
<!-- back active -->
<path d="M1123.5 65l5.5-5.5v3h7q1 0 1 1v3.5q0 1-1 1h-7v3z" fill="url(#gYel)" stroke="#c07808" stroke-width="1.3"/>
<!-- forward light -->
<path d="M1181.5 65l-5.5-5.5v3h-8q-1 0-1 1v3q0 1 1 1h8v3z" fill="url(#gTan)" stroke="#e0c890" stroke-width="1"/>
</svg>
<!-- /ICONS1 -->
<!-- ICONS2 -->
<svg class=a style="left:0;top:0" width="1582" height="702" viewBox="0 0 1582 702">
<defs>
 <linearGradient id="gFold" x1="0" y1="0" x2="0" y2="1"><stop offset="0" stop-color="#fff4cc"/><stop offset="1" stop-color="#f6cc70"/></linearGradient>
 <linearGradient id="gBlu" x1="0" y1="0" x2="0" y2="1"><stop offset="0" stop-color="#c8e0fa"/><stop offset="1" stop-color="#8ab8ee"/></linearGradient>
 <linearGradient id="gArr" x1="0" y1="0" x2="0" y2="1"><stop offset="0" stop-color="#fff4c0"/><stop offset="1" stop-color="#f0c040"/></linearGradient>
 
 
 
</defs>
<!-- Project Explorer tab icon -->
<path d="M551.5 101.5h6l2.5 2.5v8.5h-8.5z" fill="#f6f8fc" stroke="#a89858" stroke-width="1"/>
<path d="M553 105h3M553 107h3M553 109h1.5M553 111h1.5" stroke="#8aa0d0" stroke-width=".8"/>
<path d="M555.5 115.5v-7h2v-1.5h3l.8 1.5h4.2v7z" fill="url(#gFold)" stroke="#c07020" stroke-width="1"/>
<!-- close X icons -->
<g transform="translate(687.5 103.5)"><path d="M.5 2.5l2-2 3 3 3-3 2 2-3 3 3 3-2 2-3-3-3 3-2-2 3-3z" fill="#fff" stroke="#000" stroke-width="1.1" stroke-linejoin="miter"/></g>
<g transform="translate(908.5 103.5)"><path d="M.5 2.5l2-2 3 3 3-3 2 2-3 3 3 3-2 2-3-3-3 3-2-2 3-3z" fill="#fff" stroke="#000" stroke-width="1.1" stroke-linejoin="miter"/></g>
<g transform="translate(935.5 239.5)"><path d="M.5 2.5l2-2 3 3 3-3 2 2-3 3 3 3-2 2-3-3-3 3-2-2 3-3z" fill="#fff" stroke="#000" stroke-width="1.1" stroke-linejoin="miter"/></g>
<!-- PE min/max -->
<rect x="774.5" y="104.5" width="9" height="3" fill="#fff" stroke="#000" stroke-width="1.2"/>
<rect x="800.5" y="104.5" width="9" height="9" fill="#fff" stroke="#000" stroke-width="1.2"/>
<path d="M800 106.5h10" stroke="#000" stroke-width="1"/>
<!-- Debug min/max -->
<rect x="1426.5" y="104.5" width="9" height="3" fill="#fff" stroke="#000" stroke-width="1.2"/>
<rect x="1452.5" y="104.5" width="9" height="9" fill="#fff" stroke="#000" stroke-width="1.2"/>
<path d="M1452 106.5h10" stroke="#000" stroke-width="1"/>
<!-- menu triangles -->
<path d="M803.5 141.3h9l-4.5 4.5z" fill="#fff" stroke="#000" stroke-width="1.3" stroke-linejoin="round"/>
<path d="M1363.5 104.3h9l-4.5 4.5z" fill="#fff" stroke="#000" stroke-width="1.3" stroke-linejoin="round"/>
<!-- collapse all -->
<rect x="742.5" y="140.5" width="10" height="10" fill="#e4f2fc" stroke="#a8b4c4" stroke-width="1"/>
<rect x="744.5" y="142.5" width="10" height="10" fill="#eef8fe" stroke="#909cb0" stroke-width="1"/>
<path d="M746 147.5h7" stroke="#1a4a88" stroke-width="1.3"/>
<!-- link with editor -->
<path d="M766.5 142.5l4-4v2.5h8v3h-8v2.5z" fill="url(#gArr)" stroke="#c88408" stroke-width="1.1"/>
<path d="M782 149.5l-4-4v2.5h-8v3h8v2.5z" fill="url(#gArr)" stroke="#c88408" stroke-width="1.1"/>
<!-- tree expand arrows -->
<path d="M551.5 169.5l3 3-3 3z" fill="#fff" opacity=".85"/>
<g fill="#303030"><path d="M551 190v8l4.3-4z"/><path d="M551 211v8l4.3-4z"/><path d="M551 232v8l4.3-4z"/></g>
<!-- project icons -->
<g transform="translate(559 166)"><g>
  <path d="M0.5 12.5v-8l4-4h1v8z" fill="url(#gFold)" stroke="#d8b868" stroke-width=".8"/>
  <rect x="5" y="0" width="10" height="7" fill="#fff"/>
  <g fill="none" stroke="#1a4a98" stroke-width="1.05" transform="translate(5.6 0.9)"><path d="M2.6 .9Q2.2 .3 1.5 .3Q.3 .3 .3 2.6Q.3 4.9 1.5 4.9Q2.2 4.9 2.6 4.3"/><path d="M6 .9Q5.6 .3 4.9 .3Q3.7 .3 3.7 2.6Q3.7 4.9 4.9 4.9Q5.6 4.9 6 4.3"/><path d="M9.3 .8Q8.9 .3 8.2 .3Q7.1 .3 7.1 1.4Q7.1 2.5 8.2 2.6Q9.3 2.7 9.3 3.8Q9.3 4.9 8.2 4.9Q7.4 4.9 7 4.3"/></g>
  <path d="M0.5 12.5l5-6h10l-5 6z" fill="url(#gBlu)" stroke="#2a50c0" stroke-width="1"/>
 </g></g>
<g transform="translate(559 187)"><g>
  <path d="M0.5 12.5v-8l4-4h1v8z" fill="url(#gFold)" stroke="#d8b868" stroke-width=".8"/>
  <rect x="5" y="0" width="10" height="7" fill="#fff"/>
  <g fill="none" stroke="#1a4a98" stroke-width="1.05" transform="translate(5.6 0.9)"><path d="M2.6 .9Q2.2 .3 1.5 .3Q.3 .3 .3 2.6Q.3 4.9 1.5 4.9Q2.2 4.9 2.6 4.3"/><path d="M6 .9Q5.6 .3 4.9 .3Q3.7 .3 3.7 2.6Q3.7 4.9 4.9 4.9Q5.6 4.9 6 4.3"/><path d="M9.3 .8Q8.9 .3 8.2 .3Q7.1 .3 7.1 1.4Q7.1 2.5 8.2 2.6Q9.3 2.7 9.3 3.8Q9.3 4.9 8.2 4.9Q7.4 4.9 7 4.3"/></g>
  <path d="M0.5 12.5l5-6h10l-5 6z" fill="url(#gBlu)" stroke="#2a50c0" stroke-width="1"/>
 </g></g>
<g transform="translate(559 208)"><g>
  <path d="M0.5 12.5v-8l4-4h1v8z" fill="url(#gFold)" stroke="#d8b868" stroke-width=".8"/>
  <rect x="5" y="0" width="10" height="7" fill="#fff"/>
  <g fill="none" stroke="#1a4a98" stroke-width="1.05" transform="translate(5.6 0.9)"><path d="M2.6 .9Q2.2 .3 1.5 .3Q.3 .3 .3 2.6Q.3 4.9 1.5 4.9Q2.2 4.9 2.6 4.3"/><path d="M6 .9Q5.6 .3 4.9 .3Q3.7 .3 3.7 2.6Q3.7 4.9 4.9 4.9Q5.6 4.9 6 4.3"/><path d="M9.3 .8Q8.9 .3 8.2 .3Q7.1 .3 7.1 1.4Q7.1 2.5 8.2 2.6Q9.3 2.7 9.3 3.8Q9.3 4.9 8.2 4.9Q7.4 4.9 7 4.3"/></g>
  <path d="M0.5 12.5l5-6h10l-5 6z" fill="url(#gBlu)" stroke="#2a50c0" stroke-width="1"/>
 </g></g>
<g transform="translate(559 229)"><g>
  <path d="M0.5 12.5v-8l4-4h1v8z" fill="url(#gFold)" stroke="#d8b868" stroke-width=".8"/>
  <rect x="5" y="0" width="10" height="7" fill="#fff"/>
  <g fill="none" stroke="#1a4a98" stroke-width="1.05" transform="translate(5.6 0.9)"><path d="M2.6 .9Q2.2 .3 1.5 .3Q.3 .3 .3 2.6Q.3 4.9 1.5 4.9Q2.2 4.9 2.6 4.3"/><path d="M6 .9Q5.6 .3 4.9 .3Q3.7 .3 3.7 2.6Q3.7 4.9 4.9 4.9Q5.6 4.9 6 4.3"/><path d="M9.3 .8Q8.9 .3 8.2 .3Q7.1 .3 7.1 1.4Q7.1 2.5 8.2 2.6Q9.3 2.7 9.3 3.8Q9.3 4.9 8.2 4.9Q7.4 4.9 7 4.3"/></g>
  <path d="M0.5 12.5l5-6h10l-5 6z" fill="url(#gBlu)" stroke="#2a50c0" stroke-width="1"/>
 </g></g>
<!-- warning overlay on HV_Controller -->
<path d="M562.5 175l3.8 7h-7.6z" fill="#f8e080" stroke="#b08a20" stroke-width=".8"/>
<path d="M562.5 177.3v2.3M562.5 180.5v.8" stroke="#222" stroke-width="1"/>
<!-- debug bug -->
<defs><radialGradient id="gBug" cx=".45" cy=".4" r=".6"><stop offset="0" stop-color="#e4f6dc"/><stop offset="1" stop-color="#8cc486"/></radialGradient></defs><path d="M841.4 102.0L841.6 105.5M845.4 103.0L844.5 106.0M837.0 106.4L840.5 106.8M847.8 106.5L850.8 107.7M838.5 110.6L841.0 109.3M849.3 110.3L852.0 111.7M841.5 112.5L842.5 115.2M845.7 113.5L846.8 116.4" stroke="#234a40" stroke-width="1.3" fill="none" stroke-linecap="round"/><ellipse cx="845.0" cy="109.6" rx="4.9" ry="3.4" transform="rotate(42 845.0 109.6)" fill="url(#gBug)" stroke="#1d6a7a" stroke-width="1"/><circle cx="841.9" cy="106.7" r="1.6" fill="#3a8a50"/>
<!-- remove all terminated -->
<path d="M1327.5 103.5l2-2 3.5 3.5 3.5-3.5 2 2-3.5 3.5 3.5 3.5-2 2-3.5-3.5-3.5 3.5-2-2 3.5-3.5z" fill="#f4f4f4" stroke="#b4b4b4" stroke-width="1"/>
<path d="M1331.5 108.5l2-2 3.5 3.5 3.5-3.5 2 2-3.5 3.5 3.5 3.5-2 2-3.5-3.5-3.5 3.5-2-2 3.5-3.5z" fill="#a6a6a6" stroke="#9a9a9a" stroke-width="1"/>
<!-- breakpoints icon -->
<circle cx="1492.3" cy="106.5" r="2.9" fill="#5a98d0" stroke="#2a5a90" stroke-width=".8"/>
<circle cx="1499.4" cy="111.4" r="3" fill="#5a98d0" stroke="#2a5a90" stroke-width=".8"/>
<!-- checkboxes + bp icons -->
<g fill="#fafafa" stroke="#b4b4b4" stroke-width="1">
 <rect x="1499.5" y="132.5" width="13" height="13" rx="2"/>
 <rect x="1499.5" y="153.5" width="13" height="13" rx="2"/>
 <rect x="1499.5" y="174.5" width="13" height="13" rx="2"/>
</g>
<g>
 <path d="M1523.5 133v11M1518 138.5h11" stroke="#98a898" stroke-width="1"/>
 <circle cx="1523.5" cy="138.5" r="3.6" fill="#c0c0c0" stroke="#98a098" stroke-width="1"/>
</g>
<g transform="translate(0 21)"><g>
 <path d="M1523.5 133v11M1518 138.5h11" stroke="#98a898" stroke-width="1"/>
 <circle cx="1523.5" cy="138.5" r="3.6" fill="#c0c0c0" stroke="#98a098" stroke-width="1"/>
</g></g><g transform="translate(0 42)"><g>
 <path d="M1523.5 133v11M1518 138.5h11" stroke="#98a898" stroke-width="1"/>
 <circle cx="1523.5" cy="138.5" r="3.6" fill="#c0c0c0" stroke="#98a098" stroke-width="1"/>
</g></g>
<!-- editor file icons -->
<g transform="translate(839 238)"><g>
  <path d="M0.5 0.5h8l3 3v10h-11z" fill="#f2f6fc" stroke="#a08848" stroke-width="1"/>
  <path d="M8.5 0.5v3h3" fill="#e8cc80" stroke="#c8a858" stroke-width=".8"/>
  <circle cx="2.8" cy="10.8" r=".9" fill="#2a68a8"/>
  <path d="M9 6.3q-.6-1.3-2-1.3-2.5 0-2.5 3t2.5 3q1.4 0 2-1.3" fill="none" stroke="#2a68a8" stroke-width="1.6"/>
 </g></g>
<g transform="translate(961 238)"><g>
  <path d="M0.5 0.5h8l3 3v10h-11z" fill="#f2f6fc" stroke="#a08848" stroke-width="1"/>
  <path d="M8.5 0.5v3h3" fill="#e8cc80" stroke="#c8a858" stroke-width=".8"/>
  <circle cx="2.8" cy="10.8" r=".9" fill="#2a68a8"/>
  <path d="M9 6.3q-.6-1.3-2-1.3-2.5 0-2.5 3t2.5 3q1.4 0 2-1.3" fill="none" stroke="#2a68a8" stroke-width="1.6"/>
 </g></g>
<g transform="translate(1099 238)"><g>
  <path d="M0.5 0.5h8l3 3v10h-11z" fill="#f2f6fc" stroke="#a08848" stroke-width="1"/>
  <path d="M8.5 0.5v3h3" fill="#e8cc80" stroke="#c8a858" stroke-width=".8"/>
  <circle cx="2.8" cy="10.8" r=".9" fill="#2a68a8"/>
  <path d="M9 6.3q-.6-1.3-2-1.3-2.5 0-2.5 3t2.5 3q1.4 0 2-1.3" fill="none" stroke="#2a68a8" stroke-width="1.6"/>
 </g></g>
<g transform="translate(1241 238)"><g>
  <path d="M0.5 0.5h8l3 3v10h-11z" fill="#f2f6fc" stroke="#a08848" stroke-width="1"/>
  <path d="M8.5 0.5v3h3" fill="#e8cc80" stroke="#c8a858" stroke-width=".8"/>
  <circle cx="2.8" cy="10.8" r=".9" fill="#2a68a8"/>
  <path d="M9 6.3q-.6-1.3-2-1.3-2.5 0-2.5 3t2.5 3q1.4 0 2-1.3" fill="none" stroke="#2a68a8" stroke-width="1.6"/>
 </g></g>
<g transform="translate(1370 238)"><g>
  <path d="M0.5 0.5h8l3 3v10h-11z" fill="#f2f6fc" stroke="#a08848" stroke-width="1"/>
  <path d="M8.5 0.5v3h3" fill="#e8cc80" stroke="#c8a858" stroke-width=".8"/>
  <circle cx="2.8" cy="10.8" r=".9" fill="#2a68a8"/>
  <path d="M9 6.3q-.6-1.3-2-1.3-2.5 0-2.5 3t2.5 3q1.4 0 2-1.3" fill="none" stroke="#2a68a8" stroke-width="1.6"/>
 </g></g>
<g transform="translate(1497 238)"><g>
  <path d="M0.5 0.5h8l3 3v10h-11z" fill="#f2f6fc" stroke="#a08848" stroke-width="1"/>
  <path d="M8.5 0.5v3h3" fill="#e8cc80" stroke="#c8a858" stroke-width=".8"/>
  <circle cx="2.8" cy="10.8" r=".9" fill="#2a68a8"/>
  <path d="M9 6.3q-.6-1.3-2-1.3-2.5 0-2.5 3t2.5 3q1.4 0 2-1.3" fill="none" stroke="#2a68a8" stroke-width="1.6"/>
 </g></g>
<!-- fold marker -->
<circle cx="858.4" cy="482.4" r="4.2" fill="#e6f0fa" stroke="#b8c8d8" stroke-width=".9"/>
<path d="M856 482.5h5" stroke="#606878" stroke-width="1.1"/>
</svg>
<!-- /ICONS2 -->
</body></html>
